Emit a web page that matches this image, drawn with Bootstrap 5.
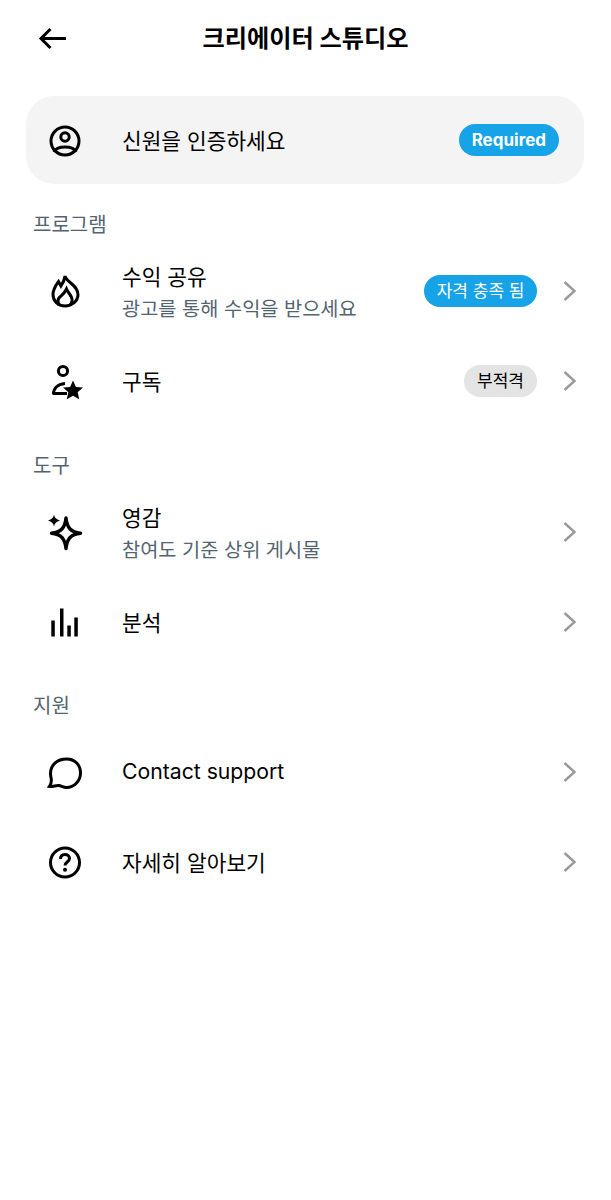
<!doctype html>
<html lang="ko"><head><meta charset="utf-8">
<link href="https://cdn.jsdelivr.net/npm/bootstrap@5.3.0/dist/css/bootstrap.min.css" rel="stylesheet">
<style>
body{background:#fff;color:#000;font-family:"Inter","Noto Sans CJK KR",sans-serif;}
.hdr{height:76px;padding-left:24px;position:relative}
.hdr-title{font-size:24.2px;font-weight:700;line-height:1;margin:0;position:absolute;left:0;right:0;text-align:center;top:27px}
.wrap{padding:20px 27px 0 26px}
.verify{height:88px;background:#f4f4f4;border-radius:28px;padding:0 25px 0 21px}
.ico{width:37px;height:37px;flex:none;margin-right:38px;overflow:visible}
.ln{fill:none;stroke:#000;stroke-width:3}
.ttl{font-size:21.4px;line-height:30px;padding-top:2px}
.ttl-lat{font-size:21.2px;padding:0 0 2px}
.sub{font-size:19.75px;line-height:28px;color:#536471;margin-top:3px}
.lbl{font-size:20px;line-height:42px;height:42px;color:#536471;padding-left:7px;margin-top:19px}
.lbl-a{margin-top:20px}
.lbl-c{margin-top:18px}
.rw{height:90px;padding-left:21px;padding-right:6px}
.pill{font-size:17px;line-height:32px;height:32px;border-radius:16px;padding:0 12.5px;white-space:nowrap}
.pill-blue{background:#16a3e8;color:#fff}
.pill-grey{background:#e4e4e4;color:#000;padding:0 13px}
.pill-bold{font-weight:700;padding:0 13px}
.chev{width:16px;height:24px;flex:none;margin-left:25px}
.chev path{fill:none;stroke:#999;stroke-width:2.4}
.grow{min-width:0}
</style></head><body>
<div class="hdr d-flex align-items-center">
  <svg class="ico" viewBox="0 0 37 37"><path class="ln" d="M42 18.500H17.500M26.500 9L17 18.500L26.500 28"/></svg>
  <h1 class="hdr-title">크리에이터 스튜디오</h1>
</div>
<div class="wrap">
  <div class="verify d-flex align-items-center">
    <svg class="ico" viewBox="0 0 37 37"><circle class="ln" cx="18" cy="19" r="14"/><circle class="ln" cx="18" cy="15" r="4.200"/><path class="ln" d="M7 30C8.500 26.500 13 25 18 25S27.500 26.500 29 30"/></svg>
    <div class="ttl flex-grow-1">신원을 인증하세요</div>
    <span class="pill pill-blue pill-bold">Required</span>
  </div>
  <div class="lbl lbl-a">프로그램</div>
  <div class="rw d-flex align-items-center">
    <svg class="ico" viewBox="0 0 37 37"><path class="ln" d="M18 3C19 9 31 12 31 21.500C31 28 25 33 18 33C11 33 6 28 6 21.500C6 16 9 12 11.500 8.500L14 13C16 10 17.500 7 18 3z"/><path class="ln" d="M12 32C10 28 11 25 14 23C16 21.500 18 19 19.500 16C21 20 26 23.500 25 28C24.500 30 24 31 23 32"/></svg>
    <div class="flex-grow-1 grow"><div class="ttl">수익 공유</div><div class="sub">광고를 통해 수익을 받으세요</div></div>
    <span class="pill pill-blue">자격 충족 됨</span>
    <svg class="chev" viewBox="0 0 16 24"><path d="M2.500 3l10 9-10 9"/></svg>
  </div>
  <div class="rw d-flex align-items-center">
    <svg class="ico" viewBox="0 0 37 37"><circle class="ln" cx="16" cy="8" r="4.600"/><path class="ln" d="M6.500 31C6.500 26 10 21 18 20.500"/><path class="ln" d="M5.500 30.500H20"/><path d="M26 17.500l2.900 6.400 7 .7-5.200 4.700 1.500 6.900-6.200-3.500-6.200 3.500 1.500-6.900-5.200-4.700 7-.7z"/></svg>
    <div class="ttl flex-grow-1">구독</div>
    <span class="pill pill-grey">부적격</span>
    <svg class="chev" viewBox="0 0 16 24"><path d="M2.500 3l10 9-10 9"/></svg>
  </div>
  <div class="lbl">도구</div>
  <div class="rw d-flex align-items-center">
    <svg class="ico" viewBox="0 0 37 37"><path d="M19 4C20 14 24 18.200 33.500 19.200C24 20.200 20 24.500 19 34.500C18 24.500 14 20.200 4.500 19.200C14 18.200 18 14 19 4z" fill="none" stroke="#000" stroke-width="3.400" stroke-linejoin="round"/><path d="M7 0.500C7.600 3.700 9.300 5.500 13 6.500C9.300 7.500 7.600 9.300 7 12.500C6.400 9.300 4.700 7.500 1 6.500C4.700 5.500 6.400 3.700 7 0.500z"/></svg>
    <div class="flex-grow-1 grow"><div class="ttl">영감</div><div class="sub">참여도 기준 상위 게시물</div></div>
    <svg class="chev" viewBox="0 0 16 24"><path d="M2.500 3l10 9-10 9"/></svg>
  </div>
  <div class="rw d-flex align-items-center">
    <svg class="ico" viewBox="0 0 37 37"><path d="M4.300 16.500h3.500v16H4.300zM13 4.500h3.500v28H13zM20.300 21.500h3.500v11h-3.500zM27.300 13.500h3.500v19h-3.500z"/></svg>
    <div class="ttl flex-grow-1">분석</div>
    <svg class="chev" viewBox="0 0 16 24"><path d="M2.500 3l10 9-10 9"/></svg>
  </div>
  <div class="lbl lbl-c">지원</div>
  <div class="rw d-flex align-items-center">
    <svg class="ico" viewBox="0 0 37 37"><path class="ln" d="M19.500 5C28 5 33.500 11 33.500 19C33.500 27 27 33.500 19.500 33.500C16.500 33.500 14.500 32 12 31.500C9 31 6 33 2.500 32.500C4.500 30 4.500 28 4.300 25C3.800 23 3.500 21 3.500 19.500C3.500 11 10 5 19.500 5z"/></svg>
    <div class="ttl ttl-lat flex-grow-1">Contact support</div>
    <svg class="chev" viewBox="0 0 16 24"><path d="M2.500 3l10 9-10 9"/></svg>
  </div>
  <div class="rw d-flex align-items-center">
    <svg class="ico" viewBox="0 0 37 37"><circle class="ln" cx="18" cy="18.500" r="14.500"/><path class="ln" d="M13.500 15C13.500 12 15.500 10.500 18 10.500S22.500 12 22.500 14.500C22.500 18 18 18 18 21.500"/><circle cx="18" cy="25.800" r="2"/></svg>
    <div class="ttl flex-grow-1">자세히 알아보기</div>
    <svg class="chev" viewBox="0 0 16 24"><path d="M2.500 3l10 9-10 9"/></svg>
  </div>
</div>
<script src="https://cdn.jsdelivr.net/npm/bootstrap@5.3.0/dist/js/bootstrap.bundle.min.js"></script>
</body></html>
